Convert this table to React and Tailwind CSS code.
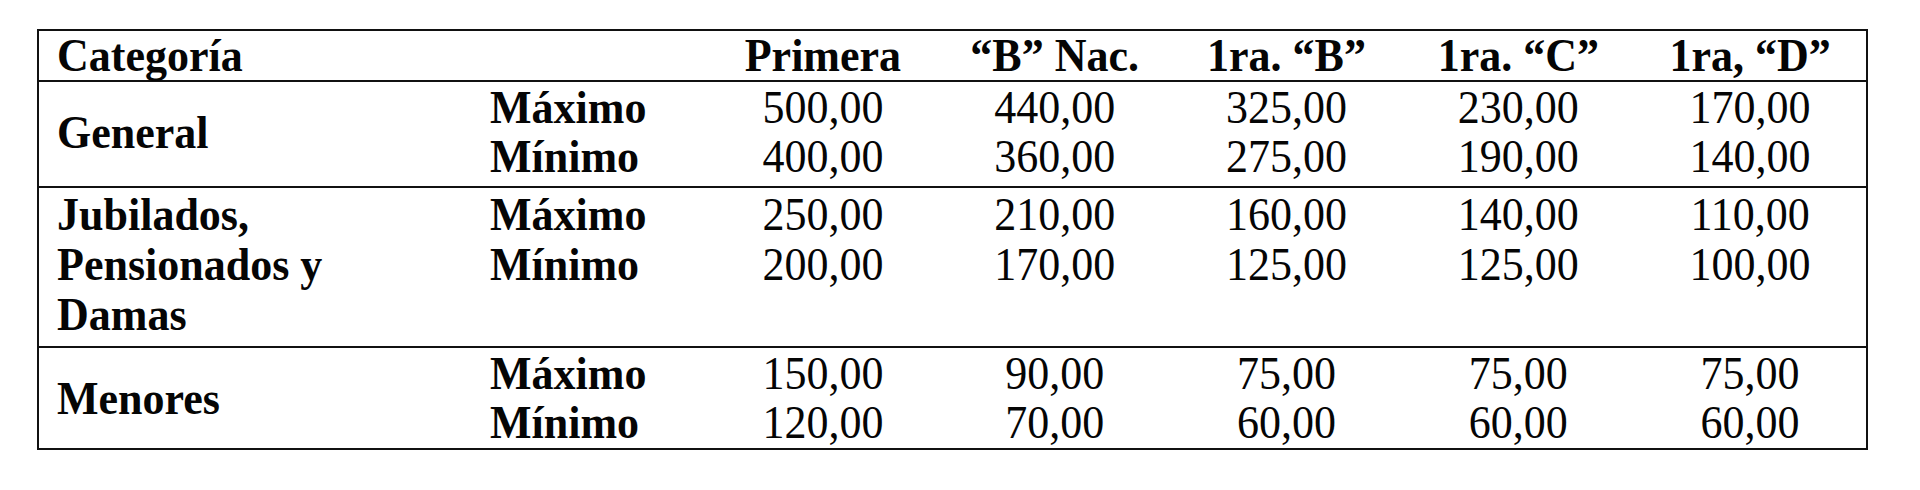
import React from "react";

const cols = "grid grid-cols-[451px_217px_repeat(5,minmax(0,1fr))]";

const headers = ["Primera", "\u201CB\u201D Nac.", "1ra. \u201CB\u201D", "1ra. \u201CC\u201D", "1ra, \u201CD\u201D"];

const sections = [
  {
    label: ["General"],
    center: true,
    max: ["500,00", "440,00", "325,00", "230,00", "170,00"],
    min: ["400,00", "360,00", "275,00", "190,00", "140,00"],
    cls: "pt-[1px] pb-[5px]",
    lead: "leading-[49px]",
  },
  {
    label: ["Jubilados,", "Pensionados y", "Damas"],
    center: false,
    max: ["250,00", "210,00", "160,00", "140,00", "110,00"],
    min: ["200,00", "170,00", "125,00", "125,00", "100,00"],
    cls: "pt-[2px] pb-[6px]",
    lead: "leading-[50px]",
  },
  {
    label: ["Menores"],
    center: true,
    max: ["150,00", "90,00", "75,00", "75,00", "75,00"],
    min: ["120,00", "70,00", "60,00", "60,00", "60,00"],
    cls: "pt-[1px] pb-[1px]",
    lead: "leading-[49px]",
  },
];

const T = "scale-y-[1.05]";

export default function App() {
  return (
    <div
      className="w-[1920px] h-[490px] bg-white text-[#050505] pt-[29px] pl-[37px]"
      style={{ fontFamily: '"Liberation Serif", "Times New Roman", serif' }}
    >
      <div className="w-[1831px] border-2 border-[#111] text-[44px]">
        <div className={`${cols} border-b-2 border-[#111] font-bold leading-[49px] h-[51px] whitespace-nowrap`}>
          <div className={`pl-[18px] ${T}`}>Categoría</div>
          <div></div>
          {headers.map((h) => (
            <div key={h} className={`text-center ${T}`}>{h}</div>
          ))}
        </div>
        {sections.map((s, i) => (
          <div
            key={i}
            className={`${cols} ${s.lead} ${s.cls} whitespace-nowrap ${i < sections.length - 1 ? "border-b-2 border-[#111]" : ""}`}
          >
            <div className={`pl-[18px] font-bold flex flex-col ${s.center ? "justify-center" : ""}`}>
              {s.label.map((l) => (
                <div key={l} className={T}>{l}</div>
              ))}
            </div>
            <div className="font-bold">
              <div className={T}>Máximo</div>
              <div className={T}>Mínimo</div>
            </div>
            {s.max.map((v, j) => (
              <div key={j} className="text-center">
                <div className={T}>{v}</div>
                <div className={T}>{s.min[j]}</div>
              </div>
            ))}
          </div>
        ))}
      </div>
    </div>
  );
}
